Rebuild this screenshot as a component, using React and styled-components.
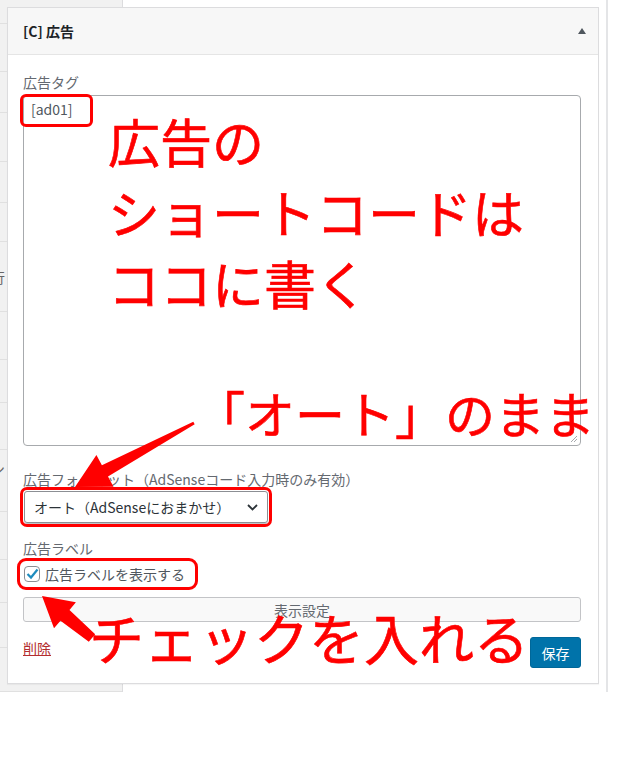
import React from 'react';
import styled, { createGlobalStyle } from 'styled-components';

const GlobalStyle = createGlobalStyle`
  html, body {
    margin: 0;
    padding: 0;
    background: #fff;
  }
  body {
    font-family: "Noto Sans CJK JP", "Noto Sans", sans-serif;
    color: #3c434a;
  }
  * {
    box-sizing: border-box;
  }
`;

const Page = styled.div`
  position: relative;
  display: grid;
  grid-template-columns: 123px 485px 1fr;
  grid-template-rows: 692px;
`;

const SideTable = styled.div`
  grid-column: 1;
  grid-row: 1;
  display: flex;
  flex-direction: column;
  background: #f1f1f1;
  border-right: 1px solid #dcdcde;
  overflow: hidden;
`;

const SideRow = styled.div`
  flex: 0 0 ${p => p.$h}px;
  display: flex;
  align-items: ${p => (p.$top ? 'flex-start' : 'center')};
  padding-top: ${p => (p.$top ? '8px' : '0')};
  border-bottom: 1px solid #e0e0e0;
  font-size: 14px;
  color: #666;
  white-space: nowrap;
  > span {
    margin-left: -9px;
  }
`;

const Stage = styled.div`
  grid-column: 2;
  grid-row: 1;
  border-right: 2px solid #e4e5e7;
`;

const Widget = styled.section`
  grid-column: 1 / 3;
  grid-row: 1;
  align-self: start;
  z-index: 1;
  width: 592px;
  margin: 7px 0 0 7px;
  background: #fff;
  border: 1px solid #dcdcde;
  box-shadow: 0 1px 1px rgba(0, 0, 0, 0.04);
`;

const WidgetHeader = styled.header`
  display: flex;
  align-items: center;
  justify-content: space-between;
  height: 47px;
  padding: 0 12px 0 15px;
  background: #f7f7f7;
  border-bottom: 1px solid #e5e5e5;
  font-size: 14px;
  font-weight: 700;
  color: #1d2327;
`;

const Toggle = styled.span`
  width: 0;
  height: 0;
  border-left: 4px solid transparent;
  border-right: 4px solid transparent;
  border-bottom: 6px solid #50575e;
`;

const WidgetBody = styled.div`
  display: flex;
  flex-direction: column;
  padding: 17px 17px 15px 15px;
`;

const Label = styled.div`
  margin-top: ${p => p.$gap || 0}px;
  font-size: 14px;
  line-height: 20px;
  color: #646970;
  white-space: nowrap;
`;

const TagBox = styled.div`
  position: relative;
  margin-top: 3px;
  height: 351px;
  border: 1px solid #a7aaad;
  border-radius: 4px;
  background: #fff;
`;

const TagValue = styled.span`
  display: inline-block;
  margin-left: -1px;
  padding: 2px 17px 5px 8px;
  font-size: 14px;
  line-height: 20px;
  color: #50575e;
  border-radius: 3px;
  outline: ${p => (p.$marked ? '3px solid #ff0000' : 'none')};
`;

const Grip = styled.svg`
  position: absolute;
  right: 2px;
  bottom: 2px;
`;

const SelectBox = styled.div`
  display: flex;
  align-items: center;
  justify-content: space-between;
  width: 244px;
  height: 32px;
  margin: 2px 0 0 1px;
  padding: 0 9px 0 9px;
  border: 1px solid #8c8f94;
  border-radius: 3px;
  box-shadow: 0 1px 0 #c3c4c7;
  font-size: 14px;
  color: #2c3338;
  white-space: nowrap;
  outline: ${p => (p.$marked ? '3px solid #ff0000' : 'none')};
  outline-offset: 1px;
`;

const CheckRow = styled.label`
  align-self: flex-start;
  display: inline-flex;
  align-items: center;
  gap: 5px;
  height: 18px;
  margin: 7px 0 0 1px;
  padding-right: 6px;
  font-size: 14px;
  color: #50575e;
  border-radius: 2px;
  outline: ${p => (p.$marked ? '3px solid #ff0000' : 'none')};
  outline-offset: 4px;
`;

const CheckBox = styled.span`
  display: inline-flex;
  align-items: center;
  justify-content: center;
  width: 16px;
  height: 16px;
  border: 1px solid #8c8f94;
  border-radius: 4px;
  background: #fff;
`;

const WideButton = styled.button`
  margin-top: 14px;
  height: 25px;
  border: 1px solid #c3c4c7;
  border-radius: 3px;
  background: #f9f9f9;
  font-family: inherit;
  font-size: 14px;
  color: #646970;
`;

const Footer = styled.div`
  display: flex;
  justify-content: space-between;
  align-items: flex-start;
  margin-top: 15px;
`;

const DeleteLink = styled.a`
  margin-top: 1px;
  font-size: 14px;
  line-height: 20px;
  color: #b32d2e;
  text-decoration: underline;
`;

const SaveButton = styled.button`
  width: 51px;
  height: 31px;
  border: 1px solid #006799;
  border-radius: 3px;
  background: #0073aa;
  font-family: inherit;
  font-size: 14px;
  color: #fff;
`;

const Callout = styled.div`
  position: absolute;
  left: ${p => p.$x}px;
  top: ${p => p.$y}px;
  z-index: 2;
  font-size: ${p => p.$size}px;
  line-height: ${p => p.$lh}px;
  color: #ff0000;
  -webkit-text-stroke: 0.6px #ff0000;
  white-space: nowrap;
  pointer-events: none;
`;

const ArrowLayer = styled.svg`
  position: absolute;
  left: 0;
  top: 0;
  z-index: 3;
  pointer-events: none;
`;

function arrowPoints([x1, y1], [x2, y2], { head, headW, neckW, tailW }) {
  const dx = x2 - x1;
  const dy = y2 - y1;
  const len = Math.hypot(dx, dy);
  const ux = dx / len;
  const uy = dy / len;
  const nx = -uy;
  const ny = ux;
  const bx = x2 - ux * head;
  const by = y2 - uy * head;
  const p = (x, y, w) => `${(x + (nx * w) / 2).toFixed(1)},${(y + (ny * w) / 2).toFixed(1)}`;
  return [
    p(x1, y1, tailW),
    p(bx, by, neckW),
    p(bx, by, headW),
    `${x2},${y2}`,
    p(bx, by, -headW),
    p(bx, by, -neckW),
    p(x1, y1, -tailW),
  ].join(' ');
}

const sideRows = [
  { h: 24 }, { h: 48 }, { h: 41 }, { h: 49 }, { h: 41 }, { h: 39 },
  { h: 70, text: '行' }, { h: 48 }, { h: 43 }, { h: 47 },
  { h: 62, text: 'シ', top: true }, { h: 48 }, { h: 43 }, { h: 45 },
  { h: 44, text: '8' },
];

export default function App() {
  return (
    <>
      <GlobalStyle />
      <Page>
        <SideTable>
          {sideRows.map((r, i) => (
            <SideRow key={i} $h={r.h} $top={r.top}>
              {r.text && <span>{r.text}</span>}
            </SideRow>
          ))}
        </SideTable>
        <Stage />

        <Widget>
          <WidgetHeader>
            <span>[C] 広告</span>
            <Toggle />
          </WidgetHeader>
          <WidgetBody>
            <Label>広告タグ</Label>
            <TagBox>
              <TagValue $marked>[ad01]</TagValue>
              <Grip width="8" height="8" viewBox="0 0 8 8">
                <path d="M7 1 L1 7 M7 4 L4 7" stroke="#a7aaad" strokeWidth="1" fill="none" />
              </Grip>
            </TagBox>

            <Label $gap={23}>広告フォーマット（AdSenseコード入力時のみ有効）</Label>
            <SelectBox $marked>
              <span>オート（AdSenseにおまかせ）</span>
              <svg width="11" height="7" viewBox="0 0 11 7">
                <path d="M1 1 L5.5 5.5 L10 1" stroke="#2c3338" strokeWidth="1.8" fill="none" />
              </svg>
            </SelectBox>

            <Label $gap={15}>広告ラベル</Label>
            <CheckRow $marked>
              <CheckBox>
                <svg width="13" height="12" viewBox="0 0 13 12">
                  <path d="M1.5 6 L5 9.5 L11.5 1.5" stroke="#1e8cbe" strokeWidth="2.2" fill="none" />
                </svg>
              </CheckBox>
              広告ラベルを表示する
            </CheckRow>

            <WideButton type="button">表示設定</WideButton>

            <Footer>
              <DeleteLink href="#">削除</DeleteLink>
              <SaveButton type="button">保存</SaveButton>
            </Footer>
          </WidgetBody>
        </Widget>

        <Callout $x={108} $y={105} $size={52} $lh={71}>
          広告の<br />ショートコードは<br />ココに書く
        </Callout>
        <Callout $x={195} $y={382} $size={50} $lh={60}>「オート」のまま</Callout>
        <Callout $x={89} $y={604} $size={55} $lh={65}>チェックを入れる</Callout>

        <ArrowLayer width="631" height="692" viewBox="0 0 631 692">
          <polygon
            fill="#ff0000"
            points={arrowPoints([194, 423], [75, 487], { head: 34, headW: 36, neckW: 13, tailW: 3 })}
          />
          <polygon
            fill="#ff0000"
            points={arrowPoints([92, 638], [42, 596], { head: 30, headW: 34, neckW: 14, tailW: 10 })}
          />
        </ArrowLayer>
      </Page>
    </>
  );
}
